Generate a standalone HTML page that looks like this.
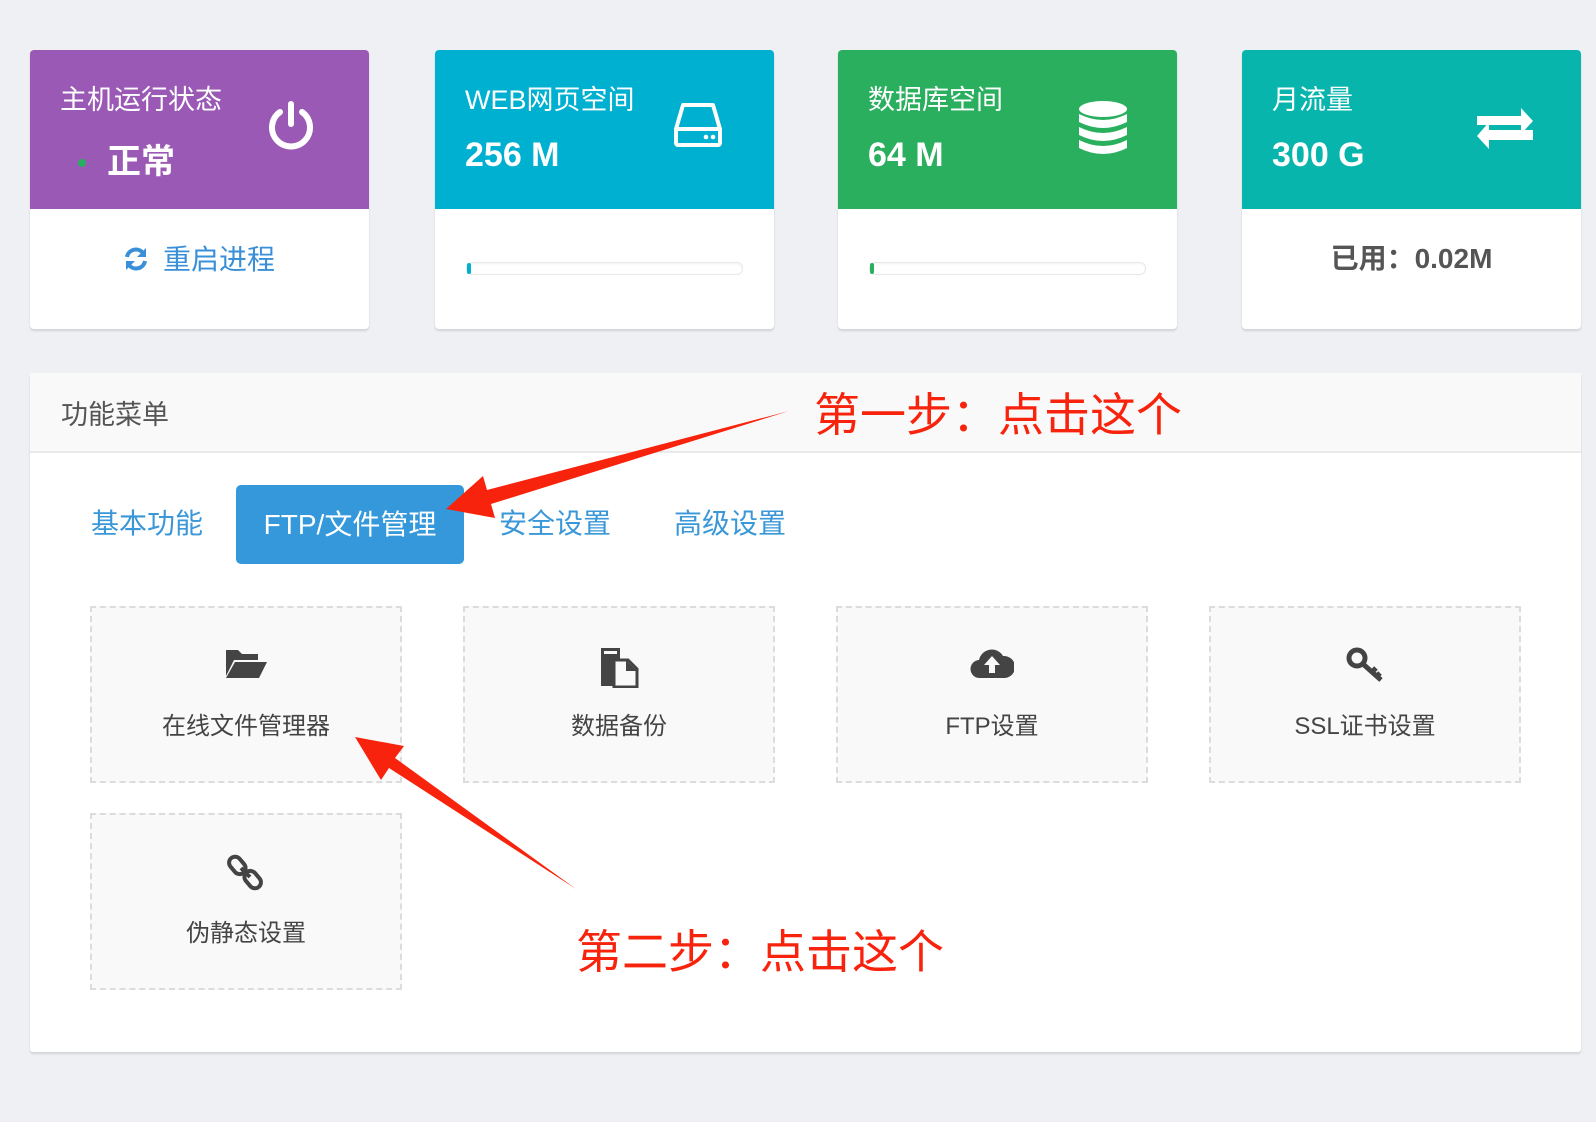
<!DOCTYPE html>
<html><head><meta charset="utf-8"><style>
*{margin:0;padding:0;box-sizing:border-box}
body{width:1596px;height:1122px;background:#eef0f4;position:relative;overflow:hidden;font-family:"Liberation Sans","Noto Sans CJK SC",sans-serif}
.a{position:absolute;white-space:nowrap}
.card{position:absolute;top:50px;width:339px;height:279px;background:#fff;border-radius:4px;box-shadow:0 2px 2px rgba(0,0,0,.12);overflow:hidden}
.top{height:159px;position:relative;color:#fff}
.t1{position:absolute;left:30px;top:28px;font-size:27px}
.t2{position:absolute;left:30px;top:86px;font-size:34px;font-weight:bold}
.bar{position:absolute;left:31px;top:212px;width:277px;height:13px;border:1px solid #e8e8e8;border-radius:6px;background:#fff;box-shadow:inset 0 1px 2px rgba(0,0,0,.05)}
.bar i{position:absolute;left:0;top:0;width:4px;height:11px;border-radius:4px}
.panel{position:absolute;left:30px;top:373px;width:1551px;height:679px;background:#fff;box-shadow:0 2px 2px rgba(0,0,0,.12);border-radius:3px}
.ph{height:80px;background:#f9f9f9;border-bottom:2px solid #eaeaea;font-size:27px;color:#555;padding:20px 31px}
.tab{position:absolute;top:484px;font-size:28px;color:#3a97d8;line-height:80px}
.tile{position:absolute;width:312px;height:177px;background:#f9f9f9;border:2px dashed #dcdcdc;text-align:center;color:#444;font-size:24px}
.tile svg{position:absolute;left:50%;top:38px;transform:translateX(-50%)}
.tile span{position:absolute;left:0;right:0;top:98px}
.red{font-size:46px;color:#f8230c}
</style></head><body>

<div class="card" style="left:30px"><div class="top" style="background:#9b59b6">
<div class="t1">主机运行状态</div>
<div style="position:absolute;left:48px;top:109px;width:8px;height:8px;border-radius:50%;background:#27ae60"></div>
<div class="t2" style="left:77px;top:84px">正常</div>
<svg style="position:absolute;left:236px;top:50px" width="50" height="54" viewBox="0 0 50 54"><path d="M14 12 A19 19 0 1 0 36 12" fill="none" stroke="#fff" stroke-width="6" stroke-linecap="round"/><line x1="25" y1="4" x2="25" y2="24" stroke="#fff" stroke-width="6" stroke-linecap="round"/></svg>
</div>
<div class="a" style="left:93px;top:188px;font-size:28px;color:#3a8fd9">
<svg width="26" height="26" viewBox="0 0 26 26" style="vertical-align:-3px;margin-right:14px"><path d="M4 11 A9 9 0 0 1 20 7" fill="none" stroke="#3a8fd9" stroke-width="4"/><path d="M23 2 L23 11 L14 11Z" fill="#3a8fd9"/><path d="M22 15 A9 9 0 0 1 6 19" fill="none" stroke="#3a8fd9" stroke-width="4"/><path d="M3 24 L3 15 L12 15Z" fill="#3a8fd9"/></svg>重启进程</div>
</div>

<div class="card" style="left:435px"><div class="top" style="background:#00b0d1">
<div class="t1">WEB网页空间</div><div class="t2">256 M</div>
<svg style="position:absolute;left:238px;top:52px" width="50" height="46" viewBox="0 0 50 46"><path d="M10 3 H40 L47 27 V41 a2 2 0 0 1 -2 2 H5 a2 2 0 0 1 -2 -2 V27Z M3 27 H47" fill="none" stroke="#fff" stroke-width="4" stroke-linejoin="round"/><circle cx="33" cy="35" r="2.3" fill="#fff"/><circle cx="40" cy="35" r="2.3" fill="#fff"/></svg>
</div><div class="bar"><i style="background:#00b0d1"></i></div></div>

<div class="card" style="left:838px"><div class="top" style="background:#2aaf5e">
<div class="t1">数据库空间</div><div class="t2">64 M</div>
<svg style="position:absolute;left:240px;top:50px" width="50" height="58" viewBox="0 0 50 58"><ellipse cx="25" cy="9" rx="24" ry="8" fill="#fff"/><path d="M1 14 Q25 26 49 14 V22 Q25 34 1 22Z M1 27 Q25 39 49 27 V35 Q25 47 1 35Z M1 40 Q25 52 49 40 V48 Q25 60 1 48Z" fill="#fff"/></svg>
</div><div class="bar"><i style="background:#2aaf5e"></i></div></div>

<div class="card" style="left:1242px"><div class="top" style="background:#08b5ad">
<div class="t1">月流量</div><div class="t2">300 G</div>
<svg style="position:absolute;left:234px;top:56px" width="58" height="44" viewBox="0 0 58 44"><path d="M1 10 H45 V2 L57 15 L45 28 V19 H1Z" fill="#fff"/><path d="M57 24 H13 V16 L1 30 L13 43 V34 H57Z" fill="#fff"/></svg>
</div><div class="a" style="left:0;right:0;top:187px;text-align:center;font-size:28px;font-weight:bold;color:#555">已用：0.02M</div></div>

<div class="panel"><div class="ph">功能菜单</div></div>
<div class="tab" style="left:91px">基本功能</div>
<div class="a" style="left:236px;top:485px;width:228px;height:79px;background:#3498db;border-radius:5px;color:#fff;font-size:28px;text-align:center;line-height:79px">FTP/文件管理</div>
<div class="tab" style="left:499px">安全设置</div>
<div class="tab" style="left:674px">高级设置</div>

<div class="tile" style="left:90px;top:606px"><svg width="44" height="34" viewBox="0 0 44 34"><path d="M2 4 H14 L18 8 H34 V14 H10 L2 30Z" fill="#444"/><path d="M11 16 H43 L35 32 H2Z" fill="#444"/></svg><span>在线文件管理器</span></div>
<div class="tile" style="left:463px;top:606px"><svg width="42" height="42" viewBox="0 0 42 42"><path d="M3 2 H22 V40 H3Z" fill="#444"/><rect x="6" y="5" width="13" height="3" fill="#f9f9f9"/><path d="M16 14 H30 L39 23 V41 H16Z" fill="#f9f9f9" stroke="#444" stroke-width="3"/><path d="M28 14 V25 H39Z" fill="#444"/></svg><span>数据备份</span></div>
<div class="tile" style="left:836px;top:606px"><svg width="44" height="34" viewBox="0 0 44 34"><path d="M10 32 A9 9 0 0 1 9 14 A13 13 0 0 1 33 10 A11 11 0 0 1 35 32Z" fill="#444"/><path d="M22 10 L30 19 H25 V27 H19 V19 H14Z" fill="#f9f9f9"/></svg><span>FTP设置</span></div>
<div class="tile" style="left:1209px;top:606px"><svg width="40" height="38" viewBox="0 0 40 38"><circle cx="12" cy="12" r="8" fill="none" stroke="#444" stroke-width="5"/><path d="M18 18 L36 34 M26 27 L31 22 M31 31 L35 27" stroke="#444" stroke-width="5" fill="none"/></svg><span>SSL证书设置</span></div>
<div class="tile" style="left:90px;top:813px"><svg width="40" height="40" viewBox="0 0 40 40"><rect x="5" y="3" width="12" height="19" rx="6" transform="rotate(-40 11 12)" fill="none" stroke="#444" stroke-width="4"/><rect x="21" y="17" width="12" height="19" rx="6" transform="rotate(-40 27 27)" fill="none" stroke="#444" stroke-width="4"/><path d="M15 15 L24 24" stroke="#444" stroke-width="4"/></svg><span>伪静态设置</span></div>

<svg class="a" style="left:0;top:0" width="1596" height="1122"><polygon points="789,411 487,490 483,476 446,509 495,518 491,504" fill="#f8230c"/><polygon points="576,889 389,768 381,780 355,737 404,746 395,758" fill="#f8230c"/></svg>
<div class="a red" style="left:814px;top:379px">第一步：点击这个</div>
<div class="a red" style="left:576px;top:916px">第二步：点击这个</div>
</body></html>
